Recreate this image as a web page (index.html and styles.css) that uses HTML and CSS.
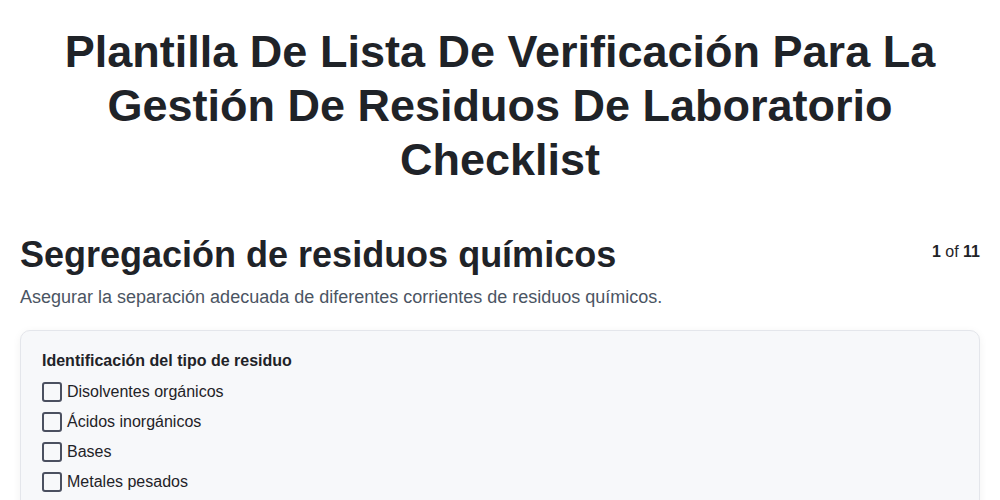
FILE: index.html
```html
<!DOCTYPE html>
<html lang="es">
<head>
<meta charset="utf-8">
<link rel="stylesheet" href="styles.css">
</head>
<body>
<div class="page">
  <h1 class="title">Plantilla De Lista De Verificación Para La Gestión De Residuos De Laboratorio Checklist</h1>
  <div class="section-head">
    <h2 class="section-title">Segregación de residuos químicos</h2>
    <div class="pager"><b>1</b> of <b>11</b></div>
  </div>
  <p class="section-desc">Asegurar la separación adecuada de diferentes corrientes de residuos químicos.</p>
  <div class="card">
    <div class="group-title">Identificación del tipo de residuo</div>
    <label class="item"><span class="box"></span>Disolventes orgánicos</label>
    <label class="item"><span class="box"></span>Ácidos inorgánicos</label>
    <label class="item"><span class="box"></span>Bases</label>
    <label class="item"><span class="box"></span>Metales pesados</label>
  </div>
</div>
</body>
</html>
```
FILE: styles.css
```css
html, body {
  margin: 0;
  padding: 0;
  background: #ffffff;
}
body {
  font-family: "Liberation Sans", Arial, sans-serif;
  color: #1f2328;
}
.page {
  padding: 25px 20px 20px 20px;
}
.title {
  margin: 0;
  text-align: center;
  font-size: 45px;
  line-height: 54px;
  font-weight: 700;
  color: #1f2328;
  padding: 0 40px;
}
.section-head {
  display: flex;
  justify-content: space-between;
  align-items: flex-start;
  margin-top: 46px;
}
.section-title {
  margin: 0;
  font-size: 36px;
  line-height: 44px;
  font-weight: 700;
  color: #1f2328;
}
.pager {
  font-size: 16px;
  color: #1f2328;
  padding-top: 10px;
}
.section-desc {
  margin: 8px 0 0 0;
  font-size: 18px;
  line-height: 24px;
  color: #4b5563;
}
.card {
  margin-top: 21px;
  background: #f7f8fa;
  border: 1px solid #e4e6eb;
  border-radius: 10px;
  box-shadow: 0 2px 8px rgba(0, 0, 0, 0.06);
  padding: 19px 21px 24px 21px;
}
.group-title {
  font-size: 16px;
  font-weight: 700;
  line-height: 22px;
  margin-bottom: 5px;
}
.item {
  display: flex;
  align-items: center;
  gap: 5px;
  font-size: 16px;
  line-height: 22px;
  height: 30px;
  color: #1f2328;
}
.box {
  width: 16px;
  height: 16px;
  border: 2px solid #4b5060;
  border-radius: 3px;
  flex: none;
}
```
